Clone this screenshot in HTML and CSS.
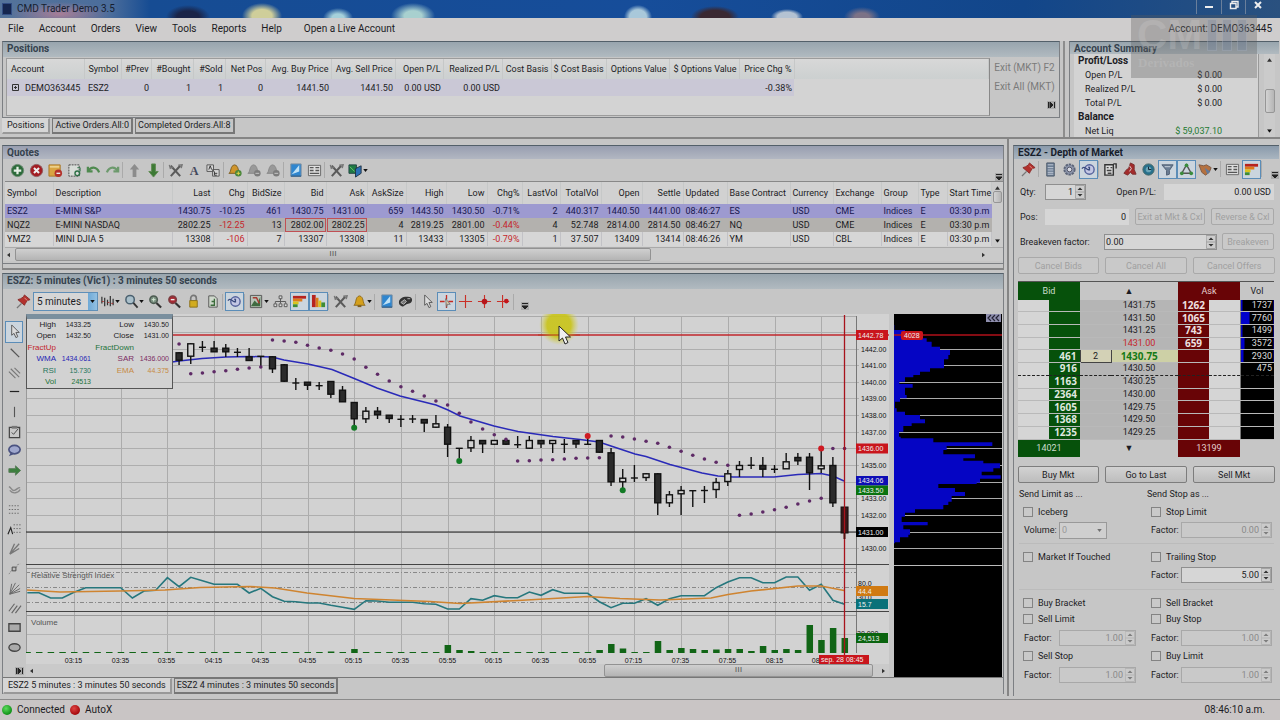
FILE: index.html
```html
<!DOCTYPE html>
<html lang="en">
<head>
<meta charset="utf-8">
<title>CMD Trader Demo 3.5</title>
<link rel="stylesheet" href="styles.css">
</head>
<body>
<svg class="defs" aria-hidden="true">
  <symbol id="plus" viewBox="0 0 16 16"><circle cx="8" cy="8" r="6.5" fill="#2c6b3a" stroke="#6a8a70"/><path d="M8 4v8M4 8h8" stroke="#e6efe6" stroke-width="2.4"/></symbol>
  <symbol id="cross" viewBox="0 0 16 16"><circle cx="8" cy="8" r="6.5" fill="#a31c22" stroke="#8f5a5c"/><path d="M5.3 5.3l5.4 5.4M10.700 5.300l-5.400 5.400" stroke="#eee" stroke-width="2.200"/></symbol>
  <symbol id="note" viewBox="0 0 16 16"><path d="M1 2h12v12H1z" fill="#d9a441" stroke="#a9772a"/><path d="M2 3h10v2H2z" fill="#ecd08a"/><circle cx="11" cy="11" r="4" fill="#b3302a"/><path d="M9 11h4" stroke="#eee" stroke-width="1.500"/></symbol>
  <symbol id="newdoc" viewBox="0 0 16 16"><path d="M2 2h11v12H2z" fill="#d8dcd8" stroke="#444" stroke-dasharray="2 1"/><circle cx="11" cy="11" r="2.500" fill="none" stroke="#2f7148" stroke-width="1.500"/><path d="M11 5h3v4" stroke="#2f7148" fill="none"/></symbol>
  <symbol id="undo" viewBox="0 0 16 16"><path d="M2 4v5h5" fill="none" stroke="#4f8a4f" stroke-width="2.400"/><path d="M2.500 8.500C5 4 11 3 14 10" fill="none" stroke="#4f8a4f" stroke-width="2.400"/></symbol>
  <symbol id="redo" viewBox="0 0 16 16"><path d="M14 4v5H9" fill="none" stroke="#6d9a6d" stroke-width="2.400"/><path d="M13.500 8.500C11 4 5 3 2 10" fill="none" stroke="#6d9a6d" stroke-width="2.400"/></symbol>
  <symbol id="up" viewBox="0 0 16 16"><path d="M8 1l5 6h-3v8H6V7H3z" fill="#8c8c8c"/></symbol>
  <symbol id="down" viewBox="0 0 16 16"><path d="M8 15l5-6h-3V1H6v8H3z" fill="#3d7a35" stroke="#5d8a50"/></symbol>
  <symbol id="tools" viewBox="0 0 16 16"><path d="M3 14L13 3M3 3l10 11" stroke="#5b5b5b" stroke-width="2.200"/><path d="M1.500 2l1 3.500 3-1.500M11 2.500l4-.5-1 3.500" fill="none" stroke="#777" stroke-width="1.600"/></symbol>
  <symbol id="letter" viewBox="0 0 16 16"><text x="3" y="13" class="ico-a">A</text></symbol>
  <symbol id="ab" viewBox="0 0 16 16"><path d="M1 2h7v7H1zM7 7h7v7H7z" fill="#d5d5d5" stroke="#555"/><path d="M3 7l1.500-4L6 7M9 9v4h2.500M9 11h3" stroke="#333" fill="none"/></symbol>
  <symbol id="bell" viewBox="0 0 16 16"><path d="M2 12c3-2 1-9 6-10 5 1 3 8 6 10z" fill="#d5a01c" stroke="#8d6a1c"/><path d="M6 12h4v2H6z" fill="#7d5d1c"/></symbol>
  <symbol id="bellplus" viewBox="0 0 16 16"><path d="M1 11c3-2 1-8 6-9 5 1 3 7 6 9z" fill="#d0952c" stroke="#7a5a1c"/><circle cx="11" cy="11" r="3.500" fill="#49863a"/><path d="M9 11h4M11 9v4" stroke="#e8d84a"/></symbol>
  <symbol id="bellgrey" viewBox="0 0 16 16"><path d="M1 11c3-2 1-8 6-9 5 1 3 7 6 9z" fill="#999" stroke="#868686"/><circle cx="11" cy="11" r="3.500" fill="#7c7c7c"/><path d="M9 11h4" stroke="#ccc"/></symbol>
  <symbol id="sheet" viewBox="0 0 16 16"><path d="M3 1h11v13H3z" fill="#2f86cf" stroke="#7a8ea0"/><path d="M4 12l8-10v7z" fill="#bfe1f5"/><path d="M3 14h11" stroke="#164d80"/></symbol>
  <symbol id="list" viewBox="0 0 16 16"><path d="M1.500 2.500h13v11h-13z" fill="#dedede" stroke="#666"/><path d="M3 5h4M3 8h4M3 11h10M9 5h4M9 8h4" stroke="#555" stroke-width="1.400"/></symbol>
  <symbol id="screens" viewBox="0 0 16 16"><path d="M1 2h8v9H1z" fill="#1f7a45" stroke="#244"/><path d="M8 6l6-3v8l-6 4z" fill="#2a6fb5" stroke="#234"/><path d="M2 4l5 5" stroke="#6ecb6a"/></symbol>
  <symbol id="caret" viewBox="0 0 6 4"><path d="M0 0h6L3 4z" fill="#111"/></symbol>
  <symbol id="pin" viewBox="0 0 16 16"><path d="M9 1l6 5-3 1-2 3-1 2-7-6 3-1 3-2z" fill="#b3312d" stroke="#8a2d2b"/><path d="M6 10l-5 5" stroke="#777" stroke-width="1.400"/><path d="M9 4l3 3" stroke="#e29a8f"/></symbol>
  <symbol id="bars" viewBox="0 0 16 16"><path d="M2 3v7M5 4v9M8 6v6M11 2v11M14 5v7" stroke="#333" stroke-width="1.300"/><path d="M2 8h2M8 9h2M12 10h2" stroke="#a33"/></symbol>
  <symbol id="lens" viewBox="0 0 16 16"><circle cx="6.500" cy="6" r="4.500" fill="#a9bfca" stroke="#4b6170" stroke-width="1.600"/><path d="M10 9.500l4.500 5" stroke="#333" stroke-width="2"/></symbol>
  <symbol id="lensin" viewBox="0 0 16 16"><circle cx="6" cy="6" r="4" fill="#7a9080" stroke="#4b5a50" stroke-width="1.600"/><path d="M9 9.500l5 5" stroke="#333" stroke-width="2.200"/><path d="M4 6h4M6 4v4" stroke="#d5ead5"/></symbol>
  <symbol id="lensout" viewBox="0 0 16 16"><circle cx="6" cy="6" r="4" fill="#a62832" stroke="#7c3c40" stroke-width="1.600"/><path d="M9 9.500l5 5" stroke="#333" stroke-width="2.200"/><path d="M4 6h4" stroke="#eee" stroke-width="1.500"/></symbol>
  <symbol id="lock" viewBox="0 0 16 16"><path d="M5 7V4.500a3 3 0 0 1 6 0V7" fill="none" stroke="#777" stroke-width="1.800"/><path d="M4 7h8v7H4z" fill="#d2ac20" stroke="#8b701c"/></symbol>
  <symbol id="page" viewBox="0 0 16 16"><path d="M4 2h6l3 3v9H4z" fill="#cfd8cc" stroke="#555"/><path d="M6 12h4V8H7M10 5v3" stroke="#3a6b3a" stroke-width="1.400" fill="none"/></symbol>
  <symbol id="refresh" viewBox="0 0 16 16"><circle cx="9" cy="8" r="5" fill="#c3c7e4" stroke="#55629c" stroke-width="1.500"/><path d="M1 7c2-3 4 0 6 1s3-1 1-3M9 5v4" stroke="#39497c" stroke-width="1.400" fill="none"/></symbol>
  <symbol id="picture" viewBox="0 0 16 16"><path d="M1.500 1.500h12v13h-12z" fill="#b8c3b8" stroke="#555"/><path d="M2 13l4-6 3 3 3-7v10z" fill="#3f6b41"/><path d="M4 4h4l3 6" stroke="#a83b32" fill="none" stroke-width="1.600"/></symbol>
  <symbol id="tree" viewBox="0 0 16 16"><path d="M6.500 2h3v3h-3zM1 10.500h3v3H1zM6.500 10.500h3v3h-3zM12 10.500h3v3h-3z" fill="#ddd" stroke="#555"/><path d="M8 5v5M2.500 10V8h11v2" fill="none" stroke="#555"/></symbol>
  <symbol id="depth" viewBox="0 0 16 16"><path d="M1 2h14v3H1z" fill="#b7241f"/><path d="M1 5h10v3H1z" fill="#dd7b1a"/><path d="M1 8h6v3H1z" fill="#d8c51e"/><path d="M1 11h5v3H1z" fill="#3e8c35"/></symbol>
  <symbol id="depthv" viewBox="0 0 16 16"><path d="M1 1h4v13H1z" fill="#b7241f"/><path d="M5 4h3v10H5z" fill="#dd7b1a"/><path d="M8 7h3v7H8z" fill="#d8c51e"/><path d="M11 9h4v5h-4z" fill="#3e8c35"/></symbol>
  <symbol id="theater" viewBox="0 0 16 16"><path d="M1 9c0-4 4-6 8-6 4-.5 6 1 6 3 0 4-4 4-6 5s-3 3-5 2-3-2-3-4z" fill="#333"/><path d="M3 9l4-3 2 2-3 3zM10 5h3" stroke="#bbb" fill="#777"/></symbol>
  <symbol id="arrow" viewBox="0 0 16 16"><path d="M5 1v11l2.500-2 2 4.500 2-1L9.500 9H13z" fill="#dcdcdc" stroke="#555"/></symbol>
  <symbol id="target" viewBox="0 0 16 16"><path d="M8 1v5M8 10v5M1 8h5M10 8h5" stroke="#c52b22" stroke-width="1.400"/><path d="M7 5l5 6-3 0-1 3z" fill="#d9c7a5" stroke="#666" stroke-width=".8"/></symbol>
  <symbol id="hair" viewBox="0 0 16 16"><path d="M8 1v14M1 8h14" stroke="#c93027" stroke-width="1.200"/></symbol>
  <symbol id="hairdot" viewBox="0 0 16 16"><path d="M8 1v14M1 8h14" stroke="#c93027" stroke-width="1.200"/><circle cx="8" cy="8" r="3" fill="#b7161b"/></symbol>
  <symbol id="hairside" viewBox="0 0 16 16"><path d="M7 1v14M1 8h13" stroke="#c93027" stroke-width="1.200"/><circle cx="11" cy="7.500" r="2.500" fill="#c3161b"/></symbol>
  <symbol id="more" viewBox="0 0 8 8"><path d="M0 0h8v8H0z" fill="#aaa"/><path d="M1 1.500h6M1 4h6L4 7z" stroke="#222" fill="#222"/></symbol>
  <symbol id="line" viewBox="0 0 16 16"><path d="M4 4l9 9" stroke="#555" stroke-width="1.300"/></symbol>
  <symbol id="channel" viewBox="0 0 16 16"><path d="M2 7l7 7M4 4l9 9M8 3l6 6" stroke="#777" stroke-width="1.200"/></symbol>
  <symbol id="hline" viewBox="0 0 16 16"><path d="M3 8h10" stroke="#222" stroke-width="1.300"/></symbol>
  <symbol id="vline" viewBox="0 0 16 16"><path d="M8 3v11" stroke="#555" stroke-width="1.200"/></symbol>
  <symbol id="clip" viewBox="0 0 16 16"><path d="M2.500 3.500h11v11h-11z" fill="#c8c8c8" stroke="#444" stroke-width="1.300"/><path d="M5 2h6v3H5z" fill="#777"/><path d="M5 9l2 2 5-6" stroke="#444" fill="none"/></symbol>
  <symbol id="bubble" viewBox="0 0 16 16"><ellipse cx="8" cy="7" rx="6" ry="4.500" fill="#9fa7cd" stroke="#4a5280" stroke-width="1.800"/><path d="M4 10l-2 4 5-2z" fill="#4a5280"/></symbol>
  <symbol id="right" viewBox="0 0 16 16"><path d="M2 6h7V3l5.500 5L9 13v-3H2z" fill="#3c7f3e" stroke="#5c7e5c"/></symbol>
  <symbol id="curve" viewBox="0 0 16 16"><path d="M2 5c3 1 3 5 6 4s3-3 6-3M3 9c3 4 9 3 11-1" stroke="#888" stroke-width="1.500" fill="none"/></symbol>
  <symbol id="dots" viewBox="0 0 16 16"><path d="M2 4h12M2 8h12M2 12h12" stroke="#666" stroke-dasharray="1.500 1.500"/></symbol>
  <symbol id="fibo" viewBox="0 0 16 16"><path d="M1 13l3-7 2 7" stroke="#222" fill="none" stroke-width="1.200"/><path d="M7 3h8M7 7h8M7 11h8" stroke="#666" stroke-dasharray="1.500 1.500"/></symbol>
  <symbol id="fan" viewBox="0 0 16 16"><path d="M3 14L8 3M3 14L13 3M3 14l10-6" stroke="#777" stroke-width="1.400"/></symbol>
  <symbol id="nodes" viewBox="0 0 16 16"><path d="M2 14l3-4M10 7l1-3 3-1" stroke="#888" fill="none" stroke-dasharray="2 1"/><path d="M5.500 6.500h4v4h-4z" fill="#bbb" stroke="#444"/></symbol>
  <symbol id="fan2" viewBox="0 0 16 16"><path d="M3 14L5 3M3 14L9 2M3 14L13 4M3 14l11-6M3 14l11-3" stroke="#666"/></symbol>
  <symbol id="slants" viewBox="0 0 16 16"><path d="M2 12l6-8M5 14l6-8M9 14l6-8" stroke="#666" stroke-width="1.200"/></symbol>
  <symbol id="rect" viewBox="0 0 16 16"><path d="M2 4h12v8H2z" fill="#aaa" stroke="#444" stroke-width="1.400"/></symbol>
  <symbol id="oval" viewBox="0 0 16 16"><ellipse cx="8" cy="8" rx="6" ry="4" fill="#aaa" stroke="#444" stroke-width="1.400"/></symbol>
  <symbol id="calc" viewBox="0 0 16 16"><path d="M4 1h8v14H4z" fill="#6b7d94" stroke="#4d5a6b"/><path d="M5 3h6M5 6h6M5 8.500h6M5 11h6M5 13h6" stroke="#c3cbd6"/></symbol>
  <symbol id="gear" viewBox="0 0 16 16"><circle cx="8" cy="8" r="5.500" fill="#8b94aa" stroke="#5c6478" stroke-width="2" stroke-dasharray="2.500 1"/><circle cx="8" cy="8" r="2.500" fill="#d8dbe3" stroke="#556"/></symbol>
  <symbol id="form" viewBox="0 0 16 16"><path d="M2 3h9v11H2zM11 2h3v5" fill="#ddd" stroke="#333" stroke-width="1.500"/><path d="M4 6h2M8 6h2M4 9h5M5 12h4" stroke="#444" stroke-width="1.500"/></symbol>
  <symbol id="redman" viewBox="0 0 16 16"><path d="M9 1l4 2v5l2 5h-4l-2-2-3 3-4-2 3-4 2-1z" fill="#a32b2b" stroke="#7b3232"/><path d="M8 4l2 3-2 3" stroke="#ddd" fill="none"/></symbol>
  <symbol id="clock" viewBox="0 0 16 16"><circle cx="8" cy="8" r="6" fill="#27708c" stroke="#466"/><circle cx="8" cy="8" r="3" fill="#6ba5b6"/><path d="M8 5v3h3" stroke="#123" fill="none"/></symbol>
  <symbol id="funnel" viewBox="0 0 16 16"><path d="M2 3h12l-4 6v4l-3 1V9z" fill="#6c7e94" stroke="#4e5e72"/><path d="M5 5h6" stroke="#cbd5df"/></symbol>
  <symbol id="triangle" viewBox="0 0 16 16"><path d="M8 3L3 12h10z" fill="none" stroke="#555" stroke-width="1.500"/><circle cx="8" cy="3.500" r="2" fill="#3a8c3d"/><circle cx="3" cy="12" r="2" fill="#3a8c3d"/><circle cx="13" cy="12" r="2" fill="#3a8c3d"/></symbol>
  <symbol id="hands" viewBox="0 0 16 16"><path d="M1 3l5 1 3-1 5 3-2 5-4 3-4-3z" fill="#b5713f" stroke="#7d5a45"/><path d="M7 6l6 4-3 3z" fill="#617a9c"/></symbol>
  <symbol id="spin" viewBox="0 0 10 14"><path d="M0 .5h9.500v13H.5zM0 7h10" fill="#cdcdcd" stroke="#a3a3a3"/><path d="M2.500 5L5 2.500 7.500 5zM2.500 9L5 11.500 7.500 9z" fill="#333"/></symbol>
  <symbol id="side" viewBox="0 0 9 8"><path d="M0 0h9v8H0z" fill="#aaa"/><path d="M1.500 1v6M7.500 1v6M3 1l3 3-3 3z" stroke="#222" fill="#222"/></symbol>
</svg>

<header class="titlebar">
  <span class="appicon"></span><h1>CMD Trader Demo 3.5</h1>
  <div class="winbtns"><button aria-label="Minimize"><svg viewBox="0 0 10 10"><path d="M1 7h8" stroke="#eee" stroke-width="2"/></svg></button><button aria-label="Restore"><svg viewBox="0 0 10 10"><path d="M3 3V1.500h6V7H7.500M1.500 3.500h5.500v5H1.500z" fill="none" stroke="#eee" stroke-width="1.400"/></svg></button><button aria-label="Close"><svg viewBox="0 0 10 10"><path d="M2 2l6 6M8 2L2 8" stroke="#eee" stroke-width="2"/></svg></button></div>
  <div class="watermark" aria-hidden="true"><b>CM<i></i><i></i><i></i></b><span>Derivados</span></div>
</header>
<nav class="menubar">
  <button>File</button><button>Account</button><button>Orders</button><button>View</button><button>Tools</button><button>Reports</button><button>Help</button><button class="live">Open a Live Account</button>
  <span class="acct">Account: DEMO363445</span>
</nav>

<section class="top">
  <div class="positions">
    <div class="panel">
      <h2>Positions</h2>
      <div class="posbody">
        <div class="listbox">
        <table class="grid postable">
          <colgroup><col style="width:77px"><col style="width:37px"><col style="width:30px"><col style="width:42px"><col style="width:32px"><col style="width:40px"><col style="width:66px"><col style="width:64px"><col style="width:48px"><col style="width:59px"><col style="width:49px"><col style="width:55px"><col style="width:63px"><col style="width:70px"><col style="width:55px"><col></colgroup>
          <thead><tr><th class="l">Account</th><th class="l">Symbol</th><th>#Prev</th><th>#Bought</th><th>#Sold</th><th>Net Pos</th><th>Avg. Buy Price</th><th>Avg. Sell Price</th><th>Open P/L</th><th>Realized P/L</th><th>Cost Basis</th><th>$ Cost Basis</th><th>Options Value</th><th>$ Options Value</th><th>Price Chg %</th><th></th></tr></thead>
          <tbody><tr><td class="l"><svg class="expand" viewBox="0 0 7 7"><path d="M.5.5h6v6h-6zM2 3.500h3M3.500 2v3" fill="none" stroke="#333"/></svg>DEMO363445</td><td class="l">ESZ2</td><td>0</td><td>1</td><td>1</td><td>0</td><td>1441.50</td><td>1441.50</td><td>0.00 USD</td><td>0.00 USD</td><td></td><td></td><td></td><td></td><td>-0.38%</td><td class="rest"></td></tr></tbody>
        </table>
        </div>
        <div class="exits"><button disabled>Exit (MKT) F2</button><button disabled>Exit All (MKT)</button><svg class="side"><use href="#side"/></svg></div>
      </div>
    </div>
    <div class="tabs"><button class="on">Positions</button><button>Active Orders.All:0</button><button>Completed Orders.All:8</button></div>
  </div>
  <div class="summary panel">
    <h2>Account Summary</h2>
    <div class="sumbody">
      <dl><dt class="h">Profit/Loss</dt><dd></dd><dt>Open P/L</dt><dd>$ 0.00</dd><dt>Realized P/L</dt><dd>$ 0.00</dd><dt>Total P/L</dt><dd>$ 0.00</dd><dt class="h">Balance</dt><dd></dd><dt>Net Liq</dt><dd class="green">$ 59,037.10</dd></dl>
      <div class="vscroll"><svg viewBox="0 0 6 4"><path d="M0 4h6L3 0z" fill="#333"/></svg><span class="thumb"></span><svg viewBox="0 0 6 4"><use href="#caret"/></svg></div>
    </div>
  </div>
</section>

<main class="middle">
  <div class="left">
    <section class="panel quotes">
      <h2>Quotes</h2>
      <div class="toolbar" id="quotebar"></div>
      <div class="quotebox">
        <table class="grid quotetable">
          <colgroup><col style="width:48px"><col style="width:119px"><col style="width:41px"><col style="width:34px"><col style="width:37px"><col style="width:42px"><col style="width:41px"><col style="width:39px"><col style="width:40px"><col style="width:41px"><col style="width:35px"><col style="width:38px"><col style="width:41px"><col style="width:41px"><col style="width:41px"><col style="width:44px"><col style="width:63px"><col style="width:43px"><col style="width:48px"><col style="width:37px"><col style="width:29px"><col></colgroup>
          <thead><tr><th class="l">Symbol</th><th class="l">Description</th><th>Last</th><th>Chg</th><th>BidSize</th><th>Bid</th><th>Ask</th><th>AskSize</th><th>High</th><th>Low</th><th>Chg%</th><th>LastVol</th><th>TotalVol</th><th>Open</th><th>Settle</th><th class="l">Updated</th><th class="l">Base Contract</th><th class="l">Currency</th><th class="l">Exchange</th><th class="l">Group</th><th class="l">Type</th><th class="l">Start Time</th></tr></thead>
          <tbody>
          <tr class="sel"><td class="l">ESZ2</td><td class="l">E-MINI S&amp;P</td><td>1430.75</td><td>-10.25</td><td>461</td><td>1430.75</td><td>1431.00</td><td>659</td><td>1443.50</td><td>1430.50</td><td>-0.71%</td><td>2</td><td>440.317</td><td>1440.50</td><td>1441.00</td><td class="l">08:46:27</td><td class="l">ES</td><td class="l">USD</td><td class="l">CME</td><td class="l">Indices</td><td class="l">E</td><td class="l">03:30 p.m</td></tr>
          <tr class="alt"><td class="l">NQZ2</td><td class="l">E-MINI NASDAQ</td><td>2802.25</td><td class="red">-12.25</td><td>13</td><td class="boxed">2802.00</td><td class="boxed">2802.25</td><td>4</td><td>2819.25</td><td>2801.00</td><td class="red">-0.44%</td><td>4</td><td>52.748</td><td>2814.00</td><td>2814.50</td><td class="l">08:46:27</td><td class="l">NQ</td><td class="l">USD</td><td class="l">CME</td><td class="l">Indices</td><td class="l">E</td><td class="l">03:30 p.m</td></tr>
          <tr><td class="l">YMZ2</td><td class="l">MINI DJIA 5</td><td>13308</td><td class="red">-106</td><td>7</td><td>13307</td><td>13308</td><td>11</td><td>13433</td><td>13305</td><td class="red">-0.79%</td><td>1</td><td>37.507</td><td>13409</td><td>13414</td><td class="l">08:46:26</td><td class="l">YM</td><td class="l">USD</td><td class="l">CBL</td><td class="l">Indices</td><td class="l">E</td><td class="l">03:30 p.m</td></tr>
          </tbody>
        </table>
        <div class="vscroll"><svg viewBox="0 0 6 4"><path d="M0 4h6L3 0z" fill="#333"/></svg><span class="thumb"></span><svg viewBox="0 0 6 4"><use href="#caret"/></svg></div>
      </div>
      <div class="hscroll"><svg viewBox="0 0 4 6"><path d="M4 0v6L0 3z" fill="#333"/></svg><span class="thumb">ııı</span><svg class="end" viewBox="0 0 4 6"><path d="M0 0v6l4-3z" fill="#333"/></svg></div>
    </section>

    <section class="panel chartpanel">
      <h2>ESZ2: 5 minutes (Vic1) : 3 minutes 50 seconds</h2>
      <div class="toolbar" id="chartbar"></div>
      <div class="chartrow">
        <div class="drawbar" id="drawbar"></div>
        <div class="chartcol">
          <svg id="chart" viewBox="26 314 863 350" role="img" aria-label="ESZ2 candlestick chart"></svg>
          <div class="hscroll"><svg viewBox="0 0 4 6"><path d="M4 0v6L0 3z" fill="#333"/></svg><span class="thumb">ııı</span><svg viewBox="0 0 4 6"><path d="M0 0v6l4-3z" fill="#333"/></svg></div>
          <table class="databox">
            <tr><td>High</td><td>1433.25</td><td>Low</td><td>1430.50</td></tr>
            <tr><td>Open</td><td>1432.50</td><td>Close</td><td>1431.00</td></tr>
            <tr><td class="c-red">FractUp</td><td></td><td class="c-green">FractDown</td><td></td></tr>
            <tr class="c-blue"><td>WMA</td><td>1434.061</td><td class="c-plum">SAR</td><td class="c-plum">1436.000</td></tr>
            <tr class="c-teal"><td>RSI</td><td>15.730</td><td class="c-orange">EMA</td><td class="c-orange">44.375</td></tr>
            <tr class="c-green"><td>Vol</td><td>24513</td><td></td><td></td></tr>
          </table>
        </div>
        <svg id="profile" viewBox="894 314 108 363" role="img" aria-label="Volume profile"></svg>
      </div>
      <div class="tabs"><button class="on">ESZ2 5 minutes : 3 minutes 50 seconds</button><button>ESZ2 4 minutes : 3 minutes 50 seconds</button></div>
    </section>
  </div>

  <section class="panel dom">
    <h2>ESZ2 - Depth of Market</h2>
    <div class="toolbar" id="dombar"></div>
    <div class="frow"><label for="qty" class="w-q">Qty:</label><span class="num w-qty"><input id="qty" value="1"><svg><use href="#spin"/></svg></span><label for="opl" class="push">Open P/L:</label><span class="num plain w-opl"><input id="opl" value="0.00 USD"></span></div>
    <div class="frow"><label for="pos" class="w-q">Pos:</label><span class="num plain w-pos"><input id="pos" value="0"></span><button class="btn w-exit" disabled>Exit at Mkt &amp; Cxl</button><button class="btn w-rev" disabled>Reverse &amp; Cxl</button></div>
    <div class="frow"><label for="be" class="w-be">Breakeven factor:</label><span class="num left-al w-num"><input id="be" value="0.00"><svg><use href="#spin"/></svg></span><button class="btn w-bev" disabled>Breakeven</button></div>
    <div class="btnrow"><button class="btn" disabled>Cancel Bids</button><button class="btn" disabled>Cancel All</button><button class="btn" disabled>Cancel Offers</button></div>
    <table class="ladder">
      <colgroup><col class="c31"><col class="c31"><col class="c31"><col><col class="c31"><col class="c31"><col class="cv"></colgroup>
      <thead><tr><th colspan="2" class="bidh">Bid</th><th colspan="2">▲</th><th colspan="2" class="askh">Ask</th><th>Vol</th></tr></thead>
      <tbody id="ladder"></tbody>
      <tfoot><tr><td colspan="2" class="bidh">14021</td><td colspan="2">▼</td><td colspan="2" class="askh">13199</td><td></td></tr></tfoot>
    </table>
    <div class="btnrow live-btns"><button class="btn">Buy Mkt</button><button class="btn">Go to Last</button><button class="btn">Sell Mkt</button></div>
    <div class="sends">
      <div class="send">
        <h3>Send Limit as ...</h3>
        <div class="blk a"><label class="ck"><input type="checkbox">Iceberg</label>
          <div class="fr"><label for="vol">Volume:</label><span class="sel"><select id="vol" disabled><option>0</option></select><svg><use href="#caret"/></svg></span></div></div>
        <div class="blk b"><label class="ck"><input type="checkbox">Market If Touched</label></div>
        <div class="blk c"><label class="ck"><input type="checkbox">Buy Bracket</label><label class="ck"><input type="checkbox">Sell Limit</label>
          <div class="fr"><label for="f1">Factor:</label><span class="num dis"><input id="f1" value="1.00" disabled><svg><use href="#spin"/></svg></span></div>
          <label class="ck"><input type="checkbox">Sell Stop</label>
          <div class="fr"><label for="f2">Factor:</label><span class="num dis"><input id="f2" value="1.00" disabled><svg><use href="#spin"/></svg></span></div></div>
      </div>
      <div class="send">
        <h3>Send Stop as ...</h3>
        <div class="blk a"><label class="ck"><input type="checkbox">Stop Limit</label>
          <div class="fr"><label for="f3">Factor:</label><span class="num dis"><input id="f3" value="0.00" disabled><svg><use href="#spin"/></svg></span></div></div>
        <div class="blk b"><label class="ck"><input type="checkbox">Trailing Stop</label>
          <div class="fr"><label for="f4">Factor:</label><span class="num"><input id="f4" value="5.00"><svg><use href="#spin"/></svg></span></div></div>
        <div class="blk c"><label class="ck"><input type="checkbox">Sell Bracket</label><label class="ck"><input type="checkbox">Buy Stop</label>
          <div class="fr"><label for="f5">Factor:</label><span class="num dis"><input id="f5" value="1.00" disabled><svg><use href="#spin"/></svg></span></div>
          <label class="ck"><input type="checkbox">Buy Limit</label>
          <div class="fr"><label for="f6">Factor:</label><span class="num dis"><input id="f6" value="1.00" disabled><svg><use href="#spin"/></svg></span></div></div>
      </div>
    </div>
  </section>
</main>
<footer class="status"><i class="led ok"></i><span>Connected</span><i class="led bad"></i><span>AutoX</span><time>08:46:10 a.m.</time></footer>
<script src="app.js"></script>
</body>
</html>
```
FILE: styles.css
```css
* { box-sizing: border-box; }
body {
  margin: 0;
  min-height: 100vh;
  display: flex;
  flex-direction: column;
  background: #c6c6c6;
  color: #1c1c24;
  font: 9px/14px Roboto, "Liberation Sans", sans-serif;
}
button, input, select { font: inherit; color: inherit; margin: 0; }
button { padding: 0; border: 0; background: none; white-space: nowrap; }
h1, h2, h3, dl, dd { margin: 0; font-weight: normal; }
table { border-collapse: collapse; border-spacing: 0; }
.defs { display: none; }
.ico-a { font: bold 13px "Liberation Serif", serif; fill: #44485c; }

/* Title and menu */
.titlebar {
  position: relative;
  display: flex;
  align-items: center;
  height: 18px;
  padding-left: 2px;
  background:
    radial-gradient(ellipse 50px 12px at 60px 14px, rgba(190, 130, 150, .8), transparent),
    radial-gradient(ellipse 20px 13px at 262px 16px, #cfce9a 50%, transparent),
    radial-gradient(ellipse 15px 10px at 338px 18px, #a5d0da 40%, transparent),
    radial-gradient(ellipse 22px 13px at 413px 16px, #a8d0cf 40%, transparent),
    radial-gradient(ellipse 14px 12px at 638px 17px, #a9c8da 60%, transparent),
    radial-gradient(ellipse 24px 11px at 715px 17px, #3a2831 60%, transparent),
    radial-gradient(ellipse 16px 8px at 787px 17px, #b4c2d2 60%, transparent),
    radial-gradient(ellipse 18px 10px at 862px 17px, #7c7286 40%, transparent),
    radial-gradient(ellipse 22px 12px at 188px 17px, #1a2448 50%, transparent),
    linear-gradient(90deg, #54739a, #4b6d9b 110px, #164c93 150px, #164d9a 50%, #12468a 80%, #2a517f);
}
.titlebar h1 { margin-left: 5px; color: #161e30; font: 10px/16px Roboto, sans-serif; }
.appicon { width: 10px; height: 12px; background: #15264f; border: 1px solid #324d83; }
.winbtns { display: flex; margin-left: auto; width: 84px; padding-right: 10px; height: 14px; margin-bottom: 4px; }
.winbtns button { flex: 1; border-left: 1px solid #6a7f9b; height: 14px; }
.winbtns svg { width: 10px; height: 10px; }
.watermark {
  position: absolute;
  z-index: 3;
  right: 23px;
  top: 15px;
  width: 126px;
  height: 63px;
  background: rgba(90, 90, 90, .33);
  color: rgba(215, 215, 215, .22);
  pointer-events: none;
}
.watermark b { display: flex; gap: 5px; padding-left: 6px; font: bold 42px/40px "Liberation Sans", sans-serif; }
.watermark i { width: 10px; margin-top: 4px; height: 32px; background: rgba(110, 130, 160, .3); border: 1px solid rgba(215, 215, 215, .2); }
.watermark span { display: block; padding-left: 7px; font: bold 13px/16px "Liberation Serif", serif; }
.menubar {
  display: flex;
  align-items: center;
  gap: 15px;
  height: 23px;
  padding: 0 8px 2px;
  background: #cfcdcd;
  font: 10px/20px Roboto, sans-serif;
}
.menubar .live { margin-left: 7px; }
.acct { margin-left: auto; }

/* Panels */
.panel { border: 1px solid #7c7f83; border-top-color: #53606a; }
.panel h2 {
  height: 15px;
  padding-left: 4px;
  background: linear-gradient(#98a5ae, #b1bac0);
  color: #35424e;
  font: bold 10px/13px Roboto, sans-serif;
  white-space: nowrap;
}
.top { display: flex; height: 98px; border-bottom: 2px solid #858585; }
.positions { flex: 1; margin-left: 2px; border-right: 2px solid #8d8d8d; margin-right: 4px; padding-right: 3px; }
.posbody { display: flex; height: 60px; }
.listbox { flex: 1; margin: 1px 0 1px 3px; border: 1px solid #9c9c9c; border-right-color: #888; background: #d3d3d3; }
.grid { width: 100%; table-layout: fixed; }
.grid th, .grid td { padding: 0 2px; text-align: right; font-weight: normal; white-space: nowrap; }
.grid .l { text-align: left; }
.grid thead tr { height: 20px; background: linear-gradient(#d8d8d8, #ccd0d0); }
.grid th { border-right: 1px solid #c6c8c8; }
.postable th:first-child, .postable td:first-child { padding-left: 4px; }
.postable th.l + th.l, .postable td.l + td.l { padding-left: 4px; }
.postable tbody tr { height: 17px; background: #cac8d6; }
.postable .rest { background: #d3d3d3; }
.expand { width: 7px; height: 7px; margin: 0 6px 0 1px; }
.exits { width: 69px; display: flex; flex-direction: column; align-items: center; gap: 5px; padding: 4px 0 2px; font: 10px/14px Roboto, sans-serif; }
.exits button { color: #7a7a7a; }
.side { width: 9px; height: 8px; align-self: flex-end; margin: 2px 3px 0 0; }
.tabs { display: flex; height: 17px; line-height: 13px; }
.tabs button { height: 16px; margin-right: 2px; padding: 0 2px; border: 1px solid #777; border-width: 1px 2px 2px 1px; }
.tabs .on { background: #d6d6d6; border-color: #d6d6d6 #999 #999 #d6d6d6; padding: 0 4px; }
.summary { width: 210px; margin-right: 1px; border-width: 1px 0 0 1px; }
.summary h2 { height: 12px; }
.sumbody { display: flex; padding-left: 4px; height: 83px; overflow: hidden; }
dl { flex: 1; display: grid; grid-template-columns: 1fr auto; grid-auto-rows: 14px; background: #d3d3d3; border-right: 1px solid #999; padding: 0 36px 0 4px; align-content: start; }
dt { padding-left: 7px; }
dd { text-align: right; }
dt.h { padding-left: 0; font-weight: bold; font-size: 10px; }
.green { color: #1f7a32; }
.vscroll { width: 11px; display: flex; flex-direction: column; align-items: center; justify-content: space-between; padding: 4px 0; background: #cbcbcb; }
.vscroll > svg { width: 5px; height: 4px; }
.vscroll .thumb { width: 10px; height: 12px; margin-bottom: auto; margin-top: 4px; border: 1px solid #969696; border-radius: 2px; background: linear-gradient(90deg, #d3d3d3, #b5b5b5); }
.summary .vscroll { margin: 0 4px 0 5px; }
.summary .thumb { margin: 10px 0 0; height: 24px; }

.middle { flex: 1; display: flex; }
.left { flex: 1; min-width: 0; padding: 6px 3px 0 2px; border-right: 2px solid #858585; }
.quotes { height: 119px; margin-bottom: 9px; box-shadow: 0 5px 0 -1px #c6c6c6, 0 6px 0 0 #858585; }
.quotes h2 { height: 13px; background: linear-gradient(#989eb0, #b2b7c2); line-height: 13px; }
.toolbar { position: relative; display: flex; align-items: center; height: 22px; padding-left: 5px; }
.toolbar > button { flex: none; display: flex; align-items: center; justify-content: center; width: 19px; height: 19px; }
.toolbar > button.dd { width: 24px; }
.toolbar svg { width: 15px; height: 15px; flex: none; }
.toolbar svg.caret { width: 5px; height: 3px; }
.toolbar .on, .drawbar .on { border: 1px solid #5b8db8; background: #cbd5de; }
.toolbar .sep { flex: none; width: 3px; height: 16px; border-left: 1px solid #aaa; }
.toolbar svg.more { width: 8px; height: 8px; align-self: flex-end; }
.toolbar .push { margin-left: auto; }
#chartbar { height: 25px; padding-left: 11px; }
#chartbar svg.more { margin: 0 0 4px 5px; }
.period { position: relative; width: 65px; height: 19px; flex: none; }
.period select { appearance: none; width: 100%; height: 100%; padding: 0 3px; border: 1px solid #5f8fb8; border-radius: 0; background: linear-gradient(90deg, #d6d6d6 54px, #6ea9d6 54px, #93c0e2); font: 10px/16px Roboto, sans-serif; }
.period svg.caret { position: absolute; right: 3px; top: 8px; }
.quotebox { display: flex; height: 67px; border-top: 1px solid #888; border-bottom: 1px solid #aaa; background: #d3d3d3; margin-left: 2px; }
.quotetable { flex: 1; align-self: flex-start; }
.quotetable thead tr { height: 22px; background: #d1d1d1; }
.quotetable tbody tr { height: 14px; background: #d6d6d6; }
.quotetable td { border-right: 1px solid #c2c2c6; padding: 0 2px; line-height: 13px; }
.quotetable tbody .sel { background: #9d9ad0; color: #17174f; }
.quotetable tbody .alt { background: #b3b1ae; }
.quotetable .sel td, .quotetable .alt td { border-right-color: transparent; }
.red { color: #c5262c; }
.quotetable td.boxed { box-shadow: inset 0 0 0 1px #c05055; }
.hscroll { display: flex; align-items: center; gap: 5px; height: 13px; padding: 0 4px; background: #cacaca; }
.hscroll svg { width: 3px; height: 6px; }
.hscroll .thumb { height: 13px; border: 1px solid #929292; border-radius: 2px; background: linear-gradient(#cfcfcf, #b4b4b4); text-align: center; font: 9px/9px "Liberation Sans", sans-serif; color: #555; }
.quotes .thumb { width: 636px; height: 13px; }
.quotes .hscroll .end { margin: 0 14px 0 auto; }
.quotes .vscroll .thumb { width: 9px; height: 12px; margin: 1px 0 auto; }

/* Chart */
.chartpanel h2 { height: 15px; line-height: 14px; }
.chartrow { display: flex; }
.chartcol { position: relative; flex: 1; min-width: 0; display: flex; flex-direction: column; }
#chart { width: 100%; background: #d2d2d2; }
#profile { width: 108px; margin: 0 1px 0 5px; background: #000; flex: none; }
.chartcol .hscroll { gap: 3px; }
.chartcol .thumb { width: 269px; margin-left: auto; }
.chartcol .hscroll svg:last-child { margin: 0 0 0 6px; }
.drawbar { width: 23px; display: flex; flex-direction: column; padding: 7px 0 0 2px; }
.drawbar button { flex: 1; width: 18px; display: flex; align-items: center; justify-content: center; }
.drawbar svg { width: 15px; height: 15px; }
.drawbar .side { width: 9px; height: 8px; margin: 10px 2px 2px; }
.databox {
  position: absolute;
  left: 0;
  top: 0;
  width: 147px;
  height: 75px;
  border: 1px solid #555;
  border-top: 5px solid #7a8f9e;
  border-collapse: separate;
  background: #d2d2d2;
  text-align: right;
}
.databox td { padding: 0 3px 0 0; }
.databox td:first-child { width: 32px; }
.databox td:nth-child(2) { width: 35px; }
.databox td:nth-child(3) { width: 43px; }
.databox td:nth-child(odd) { font: 8px/10px "Liberation Sans", sans-serif; }
.databox td:nth-child(even) { font: 7px/10px "Liberation Sans", sans-serif; }
.c-red { color: #c3262b; } .c-green { color: #24733a; } .c-blue { color: #2424b5; }
.databox .c-plum { color: #7b2c62; } .c-teal { color: #26775c; } .databox .c-orange { color: #c78b45; }
text { font: 7px "Liberation Sans", sans-serif; fill: #111; }
text.cap { font-size: 8px; fill: #555; }
text.inv { fill: #eee; }
.chartpanel .tabs { border-top: 1px solid #777; }
.chartpanel { border-bottom: 0; }

/* Depth of market */
.dom { width: 266px; margin: 6px 1px 0 4px; border-width: 1px 0 0 1px; display: flex; flex-direction: column; }
.dom h2 { height: 13px; color: #17202c; background: linear-gradient(#8a9aab, #a9b5c0); }
.dom .toolbar { height: 20px; }
.frow { display: flex; align-items: center; height: 25px; padding: 0 5px 0 6px; }
.w-q { width: 25px; } .w-be { width: 84px; } .frow .push { margin-left: auto; margin-right: 8px; }
.num { display: flex; align-items: center; height: 16px; border: 1px solid #8f8f8f; background: #d6d6d6; min-width: 0; }
.num.plain { border-color: #d6d6d6; }
.num input { flex: 1; min-width: 0; width: 20px; border: 0; padding: 0 2px; background: none; text-align: right; height: 12px; }
.num svg { width: 10px; height: 14px; flex: none; }
.left-al input { text-align: left; padding-left: 1px; }
.w-qty { width: 41px; } .w-opl { width: 110px; } .w-pos { width: 84px; } .w-num { width: 113px; }
.btn { height: 17px; border: 1px solid #7d7d7d; border-radius: 2px; background: linear-gradient(#d2d2d2, #bdbdbd); }
.btn:disabled { color: #a0a0a0; border-color: #a9a9a9; background: #c9c9c9; }
.w-exit { flex: 73; margin-left: 6px; } .w-rev { flex: 66; margin-left: 6px; } .w-bev { flex: 1; margin-left: 5px; }
.btnrow { display: grid; grid-template-columns: 81fr 83fr 82fr; gap: 6px; padding: 0 4px; margin-top: 3px; }
.ladder { margin: 7px 5px 0 4px; height: 176px; table-layout: fixed; }
.ladder .c31 { width: 31px; } .ladder .cv { width: 34px; }
.ladder th, .ladder td { padding: 0; font-weight: normal; text-align: center; }
.ladder thead tr, .ladder tfoot tr { height: 18px; }
.ladder thead { border-top: 1px solid #555; }
.ladder .bidh { background: #06510b; color: #cbdccb; }
.ladder .askh { background: #680406; color: #e6cfcf; }
.ladder tbody td { border-bottom: 1px solid #b9b9b9; line-height: 11px; }
.ladder tbody .b1, .ladder tbody .a2 { background: #d5d5d5; }
.ladder tbody .b2 { background: #06510b; color: #dfe8df; font: bold 10px/11px "Open Sans", sans-serif; text-align: right; padding-right: 3px; }
.ladder tbody .a1 { background: #680406; color: #efe0e0; font: bold 10px/11px "Open Sans", sans-serif; }
.ladder tbody .o, .ladder tbody .p { background: #b5b5b5; }
.ladder tbody .p { padding-right: 11px; }
.ladder tbody .v { background: #000; color: #ddd; text-align: right; padding-right: 2px; border-left: 1px solid #777; }
.ladder .last .o { background: #d3d1b6; border: 1px solid #444; }
.ladder tbody .last .p { background: #cdd0a6; color: #157a15; font: bold 10px/11px "Open Sans", sans-serif; }
.ladder .dash td { border-bottom: 1px dashed #222; }
.live-btns { margin-top: 9px; }
.sends { display: grid; grid-template-columns: 131fr 130fr; padding: 4px 5px 4px; }
.send h3 { font-size: 9px; line-height: 14px; padding-bottom: 3px; }
.blk { border-bottom: 1px solid #bbb; }
.blk.a { height: 40px; } .blk.b { height: 46px; padding-top: 4px; } .blk.c { border: 0; }
.ck { display: flex; align-items: center; gap: 5px; height: 16px; padding-left: 4px; }
.ck input { appearance: none; width: 10px; height: 10px; border: 1px solid #838383; background: #c9c9c9; }
.fr { display: flex; align-items: center; height: 20px; padding: 0 11px 0 5px; }
.fr > label { width: 35px; }
.send:last-child .fr { padding: 0 2px 0 4px; } .send:last-child .fr > label { width: 30px; }
.fr .num { flex: 1; }
.dis { background: #c9c9c9; border-color: #a8a8a8; color: #8a8a8a; }
.dis svg { opacity: .5; }
.blk.b .ck { height: 17px; } .blk.c { padding-top: 5px; }
.blk.c .fr { height: 21px; }
span.sel { position: relative; width: 48px; height: 17px; }
.sel select { appearance: none; width: 100%; height: 100%; border: 1px solid #999; border-radius: 0; background: #cfcfcf; padding: 0 2px; color: #999; opacity: 1; }
span.sel svg { position: absolute; right: 5px; top: 7px; width: 5px; height: 3px; opacity: .5; }

.status { display: flex; align-items: center; gap: 5px; height: 21px; margin-top: 3px; padding: 0 15px 0 2px; border-top: 1px solid #8a8a8a; background: #c9c5c5; font: 10px/18px Roboto, sans-serif; }
.status time { margin-left: auto; }
.led { width: 10px; height: 10px; border-radius: 50%; }
.ok { background: radial-gradient(circle at 40% 35%, #5cdc5c, #0c8c14 75%); }
.bad { background: radial-gradient(circle at 40% 35%, #e04444, #a00408 75%); }
```
FILE: app.js
```js
const $ = id => document.getElementById(id);

// Toolbars: "|" separator, "*" pressed, "+" with drop-down arrow, ">" pushed to the right
function bar(id, items) {
  $(id).insertAdjacentHTML('beforeend', items.split(' ').map(item => {
    if (item === '|') return '<span class="sep"></span>';
    if (item === '>') return '<span class="push"></span>';
    if (item === 'more') return '<svg class="more"><use href="#more"/></svg>';
    if (item === 'side') return '<svg class="side"><use href="#side"/></svg>';
    if (item === 'PERIOD') return '<span class="period"><select aria-label="Period"><option>5 minutes</option></select><svg class="caret"><use href="#caret"/></svg></span>';
    const on = item.includes('*'), dd = item.includes('+'), name = item.replace(/[*+]/g, '');
    return `<button class="${on ? 'on' : ''}${dd ? ' dd' : ''}" aria-label="${name}"><svg><use href="#${name}"/></svg>${dd ? '<svg class="caret"><use href="#caret"/></svg>' : ''}</button>`;
  }).join(''));
}
bar('quotebar', 'plus cross note newdoc undo redo | up down | tools letter ab | bellplus bellgrey bellgrey | sheet list | tools screens+ > more');
bar('chartbar', 'pin PERIOD bars+ lens+ lensin lensout lock page | refresh* | picture+ tree depth* depthv* | tools bell+ | sheet theater | arrow target* hair hairdot hairside | more');
bar('dombar', 'pin | calc gear refresh* | form redman clock funnel* triangle* hands+ | list depth* | > more');
bar('drawbar', 'arrow* line channel hline vline clip bubble right curve dots fibo fan nodes fan2 slants rect oval side');

// Ladder rows: bid, own order, price, ask, volume, bar width
$('ladder').innerHTML = [
  ['', '', '1431.75', '1262', '1737', 2], ['', '', '1431.50', '1065', '7760', 9], ['', '', '1431.25', '743', '1499', 2],
  ['', '', '1431.00', '659', '3572', 4], ['461', '2', '1430.75', '', '2930', 3], ['916', '', '1430.50', '', '475', 0],
  ['1163', '', '1430.25', '', '', 0], ['2364', '', '1430.00', '', '', 0], ['1605', '', '1429.75', '', '', 0],
  ['1368', '', '1429.50', '', '', 0], ['1235', '', '1429.25', '', '', 0]
].map(([b, o, p, a, v, w], i) =>
  `<tr class="${i === 4 ? 'last' : i === 5 ? 'dash' : ''}"><td class="b1"></td><td class="b2">${b}</td><td class="o">${o}</td><td class="p${i === 3 ? ' red' : ''}">${p}</td><td class="a1">${a}</td><td class="a2"></td><td class="v" style="background:linear-gradient(90deg,#00c ${w}px,#000 ${w}px)">${v}</td></tr>`).join('');

const X = i => 27.3 + i * 11.675;
const Y = p => 348.5 + (1442 - p) * 16.66;
const line = (x1, y1, x2, y2, c, extra = '') => `<path d="M${x1} ${y1}L${x2} ${y2}" stroke="${c}" ${extra}/>`;
let s = '';
const times = ['03:15', '03:35', '03:55', '04:15', '04:35', '04:55', '05:15', '05:35', '05:55', '06:15', '06:35', '06:55', '07:15', '07:35', '07:55', '08:15', '08:35'];
times.forEach((t, k) => {
  const x = Math.round(X(4 + 4 * k)) + .5;
  s += line(x, 316, x, 653, '#acacac') + `<text x="${x - 1}" y="662.500" text-anchor="middle">${t}</text>`;
});
for (let p = 1430; p <= 1443; p++) {
  const y = Math.round(Y(p)) + .5;
  s += line(26, y, 859, y, '#aeaeae');
  if (p !== 1436 && p !== 1434 && p !== 1431) s += `<text x="861" y="${y + 2}">${p}.00</text>`;
}
[572.5, 587.5, 602.5].forEach(y => s += line(26, y, 856, y, '#888', 'stroke-dasharray="4 2 1 2"'));
s += line(26, 316.5, 856, 316.5, '#aaa') + line(26, 568.5, 856, 568.5, '#999') + line(26, 615.5, 856, 615.5, '#999') + line(26, 634.500, 859, 634.500, '#b3b3b3');
s += line(856.5, 316, 856.5, 653, '#777') + line(26.500, 316, 26.500, 653, '#999');
s += line(26, 564.5, 889, 564.5, '#444') + line(26, 611.5, 889, 611.5, '#444') + line(26, 532, 856, 532, '#222');
s += '<text class="cap" x="31" y="578">Relative Strength Index</text><text class="cap" x="31" y="625">Volume</text>';
s += '<text x="858" y="585.500">80.0</text><text x="858" y="599.500">30.0</text><text x="857" y="636">30,000</text>';

const poly = (pts, c, w) => `<polyline points="${pts}" fill="none" stroke="${c}" stroke-width="${w}"/>`;
s += line(26, 335, 889, 335, '#c1272d', 'stroke-width="1.3"');
s += poly('172,362 179,361 202,358.500 226,357 249,356.500 272,357 284,360 308,364 332,369.500 353,378 377,388 400,396 420,401 436,405 448,410 460,416 494,426 518,431.500 553,436.500 580,439.500 599,442 611,446 635,454 646,456.500 670,464.500 702,473 718,476 733,477 774,477 798,474.500 821,473.500 833,476 844,481', '#2a2ab8', 1.5);

// i, body top, body bottom, wick top, wick bottom, kind (f filled, h hollow, c cross)
const candles = `13 352.3 360.7 352 365 f;14 343.3 356.7 343 364 h;15 347.3 347.3 341 352 c;16 347.7 352.3 341 352 f;17 347.7 352.3 344 357 f;18 352.3 352.3 348 357 c;19 356.3 361 348 361 f;20 356.3 356.3 356 368 c;21 356.3 369.3 356 373 f;22 364.3 381.7 364 382 f;23 383 383 378 390 c;24 381.7 385.3 382 390 f;25 385.7 385.7 382 390 c;26 381 394.7 381 398 f;27 389.7 402.3 386 402 f;28 402 419.3 402 425 f;29 410.7 419.3 407 423 h;30 410.7 415.3 407 419 f;31 414.7 419 415 423 f;32 419.3 419.3 415 427 c;33 419 419 415 423 c;34 419 423.5 419 432 f;35 423.3 427.7 415 428 h;36 426.7 444.7 424 457 f;37 448.3 448.3 448 458 c;38 440 448.3 436 452 h;39 440 444.3 440 453 f;40 440 444.7 440 445 h;41 440 444.7 440 445 f;42 444.7 444.7 436 448 c;43 440 448.7 436 449 h;44 440 444.3 440 448 f;45 440 444 440 453 h;46 444.3 444.3 439 453 c;47 440 444.5 440 448 f;48 444.3 444.3 436 445 c;49 440 452.7 440 453 f;50 452.3 482.3 448 486 f;51 477.7 482.3 469 490 h;52 478 478 465 482 c;53 473.3 478 473 481 h;54 473.3 503.3 473 515 f;55 494.3 503.3 491 507 h;56 490 494.3 486 515 h;57 490.7 490.7 491 507 c;58 490.5 490.5 486 503 c;59 482 490 478 498 h;60 473.3 482 470 486 h;61 465 470 461 477 h;62 465.3 465.3 457 469 c;63 465 469.7 457 477 f;64 469.3 469.3 465 473 c;65 461.3 469.3 453 469 h;66 457 461.3 453 465 f;67 456.7 473.3 453 490 f;68 465.3 469.3 448 473 h;69 465 503.3 457 507 f`;
candles.split(';').forEach(row => {
  const [i, t, b, wt, wb, k] = row.split(' ');
  const x = X(+i);
  s += line(x, wt, x, wb, '#111', 'stroke-width="1.4"');
  if (k === 'c') s += line(x - 3.5, +t, x + 3.5, +t, '#111', 'stroke-width="1.4"');
  else s += `<rect x="${x - 3}" y="${+t + .5}" width="6" height="${Math.max(b - t - 1, 3)}" fill="${k === 'f' ? '#2b2b2b' : '#d2d2d2'}" stroke="#111" stroke-width="1.4"/>`;
});

const dot = (i, y, c, r) => `<circle cx="${X(i)}" cy="${y}" r="${r}" fill="${c}"/>`;
[344, 373.7, 373, 371.7, 370.7, 369.3, 368, 367, 340, 341, 342.3, 345.3, 348, 350.3, 354, 359, 367.3, 374.3, 381, 386.7, 391.3, 396, 401, 405, 413.3, 422, 429, 434.7, 439.3, 461, 460.7, 460, 459.7, 459, 458.3, 458, 457.7, 436, 437, 439, 441.3, 443.3, 447.3, 451.3, 455.3, 459, 462.3, 465.3, 515.3, 514, 512, 509.7, 507.3, 504, 501, 498.3, 448.5, 448.5]
  .forEach((y, k) => s += dot(13 + k, y, '#5e2a66', 1.8));
s += dot(28, 427.7, '#127a25', 3) + dot(37, 461, '#127a25', 3) + dot(51, 490.3, '#127a25', 3) + dot(48, 436, '#cf1a22', 3) + dot(68, 448.5, '#cf1a22', 3);

const rsi = [592.7, 592.7, 598, 598, 592.3, 587.7, 587.7, 587.7, 587.7, 598, 591, 590.3, 577.7, 586.7, 577.3, 580.7, 584.3, 584.3, 584.3, 593, 588.3, 596.7, 601.3, 601.7, 603, 603, 605.3, 607.3, 609.3, 600.7, 601, 602.3, 602.3, 602.3, 603.7, 604.3, 609, 609, 598.7, 600.3, 595.7, 597.7, 597.7, 592, 595.3, 589.7, 593.3, 593.3, 593.3, 601.7, 607.7, 603.3, 603.3, 598.7, 605.3, 598.7, 595.7, 595.7, 595.7, 587.7, 582, 577.7, 577.7, 582.7, 582.7, 577, 577, 590.3, 584.3, 600.3, 604.3];
s += poly(rsi.map((y, i) => X(i) + ',' + y).join(' '), '#26777d', 1.6);
s += poly('27,590 60,592 120,591 165,590 200,587.500 250,586.500 275,588 307,593 354,598.500 430,601.500 460,603.500 518,600.500 588,596.500 620,598.500 660,600 711,598 728,594.500 751,591 798,586 821,586 844,590.500', '#cf8430', 1.6);

const vol = { 26: 1.5, 28: 4, 36: 8, 37: 3, 38: 2, 49: 3, 50: 9, 51: 4.5, 54: 12, 55: 3, 56: 5, 57: 4, 58: 3, 59: 3.5, 60: 4, 61: 4, 62: 2, 63: 7, 64: 3, 65: 4, 66: 3, 67: 28, 68: 13, 69: 25, 70: 15 };
for (let i = 0; i <= 70; i++) { const h = vol[i] || 1; s += `<rect x="${X(i) - 3}" y="${653 - h}" width="6.500" height="${h}" fill="#116516"/>`; }

s += `<rect x="${X(70) - 3.5}" y="507" width="7" height="26" fill="#3a1718" stroke="#111"/>`;
s += line(844.5, 315, 844.5, 664, '#a8131c', 'stroke-width="1.3"') + line(844.5, 533, 844.5, 539, '#511', 'stroke-width="2"');
const tag = (x, y, w, h, c, t) => `<rect x="${x}" y="${y}" width="${w}" height="${h}" fill="${c}"/><text class="inv" x="${x + 2}" y="${y + h / 2 + 2.5}">${t}</text>`;
s += tag(856, 330, 32, 10, '#c9151c', '1442.78') + tag(856, 443.500, 32, 10, '#c9151c', '1436.00') + tag(856, 476, 32, 9.500, '#0d0db5', '1434.06') + tag(856, 485.500, 32, 9.500, '#0a730f', '1433.50') + tag(856, 527, 32, 10, '#000', '1431.00');
s += tag(856, 586, 32, 10, '#d07a12', '44.4') + tag(856, 599, 32, 10, '#0a7179', '15.7') + tag(856, 633, 32, 10, '#0a640f', '24,513') + tag(819, 655, 50, 9.500, '#c9151c', 'sep. 28 08:45');
s += '<defs><radialGradient id="glow"><stop offset=".6" stop-color="#c9c417"/><stop offset="1" stop-color="#d2cf50" stop-opacity="0"/></radialGradient></defs><circle cx="559" cy="325" r="20" fill="url(#glow)" opacity=".9"/>' + line(538, 335, 580, 335, '#b83820') + '<path d="M559 326v15l3.500-3 2.500 6 3-1.500-2.500-5.500h5z" fill="#eee" stroke="#222"/>';
$('chart').innerHTML = s;

// Volume at price, in the same price scale as the chart
let v = '';
for (let p = 1430; p <= 1442; p++) v += line(894, Math.round(Y(p)) + .5, 1002, Math.round(Y(p)) + .5, '#aaa');
v += line(894, 565.5, 1002, 565.5, '#bbb');
const edge = [[75, 343], [90, 375], [105, 420], [115, 440], [125, 455], [140, 480], [150, 510], [165, 505], [178, 492], [195, 492], [205, 450], [215, 420], [225, 400], [232, 375], [245, 358], [252, 398], [263, 375], [285, 380], [295, 360], [305, 345], [325, 350], [335, 375], [345, 420], [358, 435], [370, 395], [378, 370], [395, 357], [410, 362], [415, 460], [427, 637], [438, 500], [450, 490], [463, 585], [475, 550], [482, 610], [490, 660], [505, 640], [515, 605], [526, 662], [536, 600], [548, 590], [552, 475], [564, 525], [576, 555], [588, 515], [605, 505], [615, 490], [628, 405], [638, 375], [650, 365], [666, 443], [676, 370], [688, 390], [704, 385], [712, 360], [727, 345]];
let d = 'M894 325';
edge.forEach(([y, x], k) => { const next = edge[k + 1] || [730]; d += `L${780 + x / 3} ${300 + y / 3}V${300 + next[0] / 3}`; });
v += `<path d="${d}H894z" fill="#0505c4"/>` + line(894, 335, 1002, 335, '#b0101a', 'stroke-width="1.3"');
v += '<rect x="901" y="331" width="22" height="9" rx="2" fill="#c9151c"/><text class="inv" x="904" y="338">4028</text>';
v += '<rect x="986" y="314" width="15" height="8" fill="#8f8fae"/><path d="M991 315l-3 3 3 3M995 315l-3 3 3 3M999 315l-3 3 3 3" fill="none" stroke="#223" stroke-width="1.200"/>';
$('profile').innerHTML = v;
```
